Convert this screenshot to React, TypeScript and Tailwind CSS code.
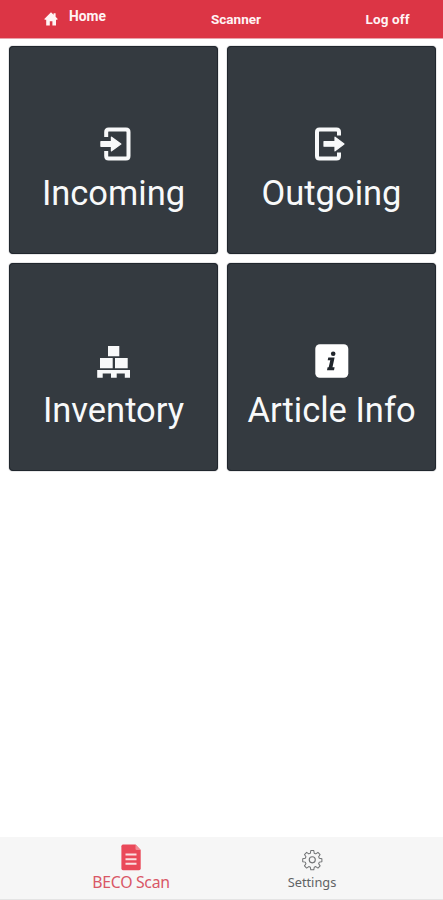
import type { ReactNode } from "react";

type TileProps = {
  label: string;
  icon: ReactNode;
};

function HomeIcon() {
  return (
    <svg viewBox="0 0 14 14" className="h-[14px] w-[14px]" fill="currentColor">
      <path d="M7 0.3 L9.6 2.8 V1.2 H11.6 V4.8 L13.7 7 L13.2 7.8 H12 V13.6 H8.4 V9.2 H5.8 V13.6 H2.2 V7.8 H0.8 L0.3 7 Z" />
    </svg>
  );
}

function IncomingIcon() {
  return (
    <svg viewBox="0 0 34 36" className="h-9 w-[34px]">
      <path
        d="M9.2 12 V7 Q9.2 4.5 11.7 4.5 H29 Q31.5 4.5 31.5 7 V31 Q31.5 33.5 29 33.5 H11.7 Q9.2 33.5 9.2 31 V26"
        fill="none"
        stroke="currentColor"
        strokeWidth="4"
      />
      <path
        d="M4 16.6 H14.5 V12.2 L23.8 19 L14.5 25.8 V21.2 H4 Z"
        fill="currentColor"
        stroke="currentColor"
        strokeWidth="1.4"
        strokeLinejoin="round"
      />
    </svg>
  );
}

function OutgoingIcon() {
  return (
    <svg viewBox="0 0 34 36" className="h-9 w-[34px]">
      <path
        d="M24 10.5 V7 Q24 4.5 21.5 4.5 H4.5 Q2 4.5 2 7 V31 Q2 33.5 4.5 33.5 H21.5 Q24 33.5 24 31 V27.5"
        fill="none"
        stroke="currentColor"
        strokeWidth="4"
      />
      <path
        d="M9 16.6 H20 V12.2 L29 19 L20 25.8 V21.2 H9 Z"
        fill="currentColor"
        stroke="currentColor"
        strokeWidth="1.2"
        strokeLinejoin="round"
      />
    </svg>
  );
}

function PalletIcon() {
  return (
    <svg viewBox="0 0 34 36" className="h-9 w-[34px]" fill="currentColor">
      <path d="M11 4h11.3v10.3h-11.3z M3 16h12.7v10.3h-12.7z M18 16h12.7v10.3h-12.7z" />
      <path d="M0.2 28 H33 V35.8 H27.8 V31.5 H19.7 V35.8 H14 V31.5 H5.7 V35.8 H0.2 Z" />
    </svg>
  );
}

function InfoIcon() {
  return (
    <svg viewBox="0 0 34 36" className="h-9 w-[34px]">
      <rect x="0.3" y="2.2" width="33" height="33.5" rx="4.5" fill="white" />
      <circle cx="18.2" cy="11.7" r="2.3" fill="#20262c" />
      <path
        d="M13.3 15.5 H19.6 L17.5 25.3 H19.6 L19 28.2 H12 L12.6 25.3 H13.7 L15.3 18.3 H12.7 Z"
        fill="#20262c"
      />
    </svg>
  );
}

function DocumentIcon() {
  return (
    <svg viewBox="0 0 20 27" className="h-[27px] w-5">
      <path d="M2 0.5 H14.5 L19.7 6 V24.5 Q19.7 26.3 18 26.3 H2 Q0.4 26.3 0.4 24.5 V2.2 Q0.4 0.5 2 0.5 Z" fill="#ea4959" />
      <path d="M14.5 0.5 L19.7 6 H15.7 Q14.5 6 14.5 4.8 Z" fill="#f28b94" />
      <path d="M4.5 10.5h11 M4.5 15.2h11 M4.5 19.8h11" stroke="#fbdfe1" strokeWidth="2" />
    </svg>
  );
}

function GearIcon() {
  return (
    <svg
      viewBox="0 0 24 24"
      className="h-[22px] w-[22px]"
      fill="none"
      stroke="#707274"
      strokeWidth="1.2"
      strokeLinejoin="round"
    >
      <path
        d="M10.2 1.5h3.6l.5 3.1 1.9.8 2.6-1.8 2.6 2.6-1.8 2.6.8 1.9 3.1.5v3.6l-3.1.5-.8 1.9 1.8 2.6-2.6 2.6-2.6-1.8-1.9.8-.5 3.1h-3.6l-.5-3.1-1.9-.8-2.6 1.8-2.6-2.6 1.8-2.6-.8-1.9-3.1-.5v-3.6l3.1-.5.8-1.9-1.8-2.6 2.6-2.6 2.6 1.8 1.9-.8z"
        transform="translate(1.4 .4) scale(.91)"
      />
      <circle cx="12.3" cy="11.8" r="3.3" />
    </svg>
  );
}

function Tile({ label, icon }: TileProps) {
  return (
    <button className="flex flex-col items-center rounded-[4px] border border-[#20262d] bg-[#343a40] pt-[78px] text-[#f8f9fa] shadow-[0_0_1px_#20262d]">
      {icon}
      <span className="mt-[12px] text-[34.5px] leading-[40px] whitespace-nowrap">
        {label}
      </span>
    </button>
  );
}

export default function App() {
  return (
    <div className="flex h-[900px] w-[443px] flex-col bg-white font-['Roboto',sans-serif]">
      <header className="flex h-[39px] shrink-0 items-start border-b border-[#e9a2aa] bg-[#dc3545] text-[13.5px] leading-[16px] font-bold text-[#fff3f4]">
        <a className="ml-[44px] flex w-[167px] gap-[11px]">
          <span className="mt-[12px]">
            <HomeIcon />
          </span>
          <span className="mt-[8px] text-[13.8px]">Home</span>
        </a>
        <span className="mt-[10.5px] w-[154.5px]">Scanner</span>
        <span className="mt-[10.5px] tracking-[0.15px] whitespace-nowrap">Log off</span>
      </header>

      <main className="grid grid-cols-[209px_209px] grid-rows-[208px_208px] gap-[9px] pt-[7px] pl-[9px]">
        <Tile label="Incoming" icon={<IncomingIcon />} />
        <Tile label="Outgoing" icon={<OutgoingIcon />} />
        <Tile label="Inventory" icon={<PalletIcon />} />
        <Tile label="Article Info" icon={<InfoIcon />} />
      </main>

      <nav className="mt-auto flex h-[63px] border-b border-[#e4e4e4] bg-[#f6f6f6] font-['Noto_Sans',sans-serif]">
        <a className="ml-[81px] flex w-[100px] flex-col items-center pt-[7px] text-[15.8px] leading-[20px] tracking-[-0.3px] text-[#d95766]">
          <DocumentIcon />
          <span className="mt-px whitespace-nowrap">BECO Scan</span>
        </a>
        <a className="ml-[81px] flex w-[100px] flex-col items-center pt-[12px] text-[12.8px] leading-[18px] text-[#606264]">
          <GearIcon />
          <span className="mt-[2px]">Settings</span>
        </a>
      </nav>
    </div>
  );
}
